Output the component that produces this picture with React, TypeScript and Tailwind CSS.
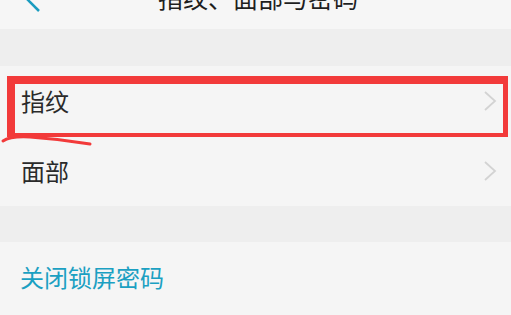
import React from "react";

function Chevron() {
  return (
    <svg width="14" height="22" viewBox="0 0 14 22" className="shrink-0">
      <polyline points="2,2 12,11 2,20" fill="none" stroke="#d3d3d3" strokeWidth="1.8" />
    </svg>
  );
}

export default function App() {
  return (
    <div
      className="relative w-[511px] h-[315px] overflow-hidden bg-[#f5f5f5] flex flex-col"
      style={{ fontFamily: '"Noto Sans CJK SC", "Noto Sans", sans-serif' }}
    >
      {/* header */}
      <div className="h-[29px] shrink-0 bg-[#f6f6f6] relative flex justify-center overflow-hidden">
        <svg width="40" height="14" viewBox="0 0 40 14" className="absolute left-0 top-0">
          <line x1="25" y1="-3" x2="39" y2="11" stroke="#1a9cbf" strokeWidth="2.5" />
        </svg>
        <div className="text-[25px] leading-[25px] text-[#1f1f1f] mt-[-15px] ml-[5px]">
          指纹、面部与密码
        </div>
      </div>
      {/* band */}
      <div className="h-[37px] shrink-0 bg-[#eeeeee]" />
      {/* rows */}
      <div className="h-[70px] shrink-0 flex items-center justify-between pl-[21px] pr-[14px]">
        <span className="text-[24px] leading-none text-[#2a2a2a]">指纹</span>
        <Chevron />
      </div>
      <div className="h-[70px] shrink-0 flex items-center justify-between pl-[21px] pr-[14px]">
        <span className="text-[24px] leading-none text-[#2a2a2a]">面部</span>
        <Chevron />
      </div>
      <div className="h-[36px] shrink-0 bg-[#eeeeee]" />
      <div className="h-[70px] shrink-0 flex items-center pl-[20px]">
        <span className="text-[24px] leading-none text-[#1ba0c2]">关闭锁屏密码</span>
      </div>

      {/* red annotation box */}
      <div className="absolute left-[7px] top-[76px] w-[501px] h-[61px] border-[#f23a3a] border-t-[8px] border-l-[8px] border-r-[5px] border-b-[4px]" />
      <svg width="120" height="20" viewBox="0 0 120 20" className="absolute left-0 top-[130px]">
        <path d="M3 11 Q 10 6 30 7 Q 60 9 90 14" fill="none" stroke="#f23a3a" strokeWidth="3" strokeLinecap="round" />
      </svg>
    </div>
  );
}
